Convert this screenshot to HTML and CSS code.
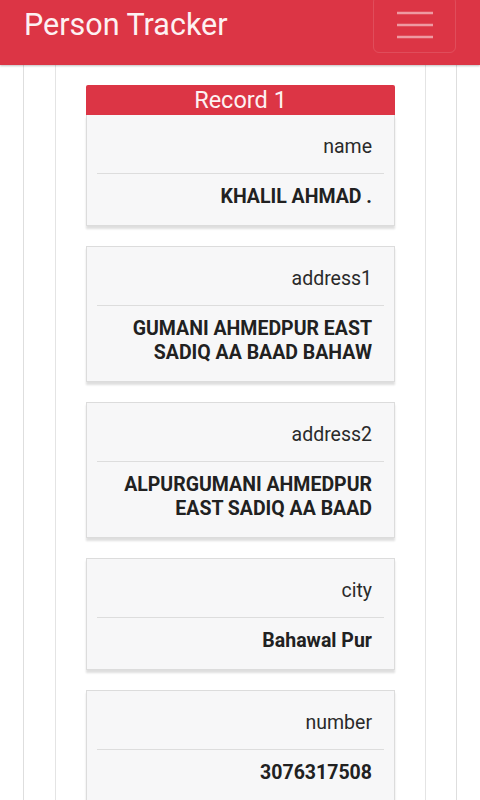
FILE: index.html
```html
<!DOCTYPE html>
<html>
<head>
<meta charset="utf-8">
<title>Person Tracker</title>
<link rel="stylesheet" href="styles.css">
</head>
<body>
<nav class="navbar">
  <span class="brand">Person Tracker</span>
  <button class="toggler" aria-label="menu">
    <svg width="36" height="30" viewBox="0 0 36 30"><path d="M0 3h36M0 15h36M0 27h36" stroke="rgba(255,255,255,0.5)" stroke-width="2.4"/></svg>
  </button>
</nav>
<div class="outer">
  <div class="inner">
    <div class="record-head">Record 1</div>
    <div class="card">
      <div class="label">name</div>
      <div class="sep"></div>
      <div class="value">KHALIL AHMAD .</div>
    </div>
    <div class="card">
      <div class="label">address1</div>
      <div class="sep"></div>
      <div class="value">GUMANI AHMEDPUR EAST<br>SADIQ AA BAAD BAHAW</div>
    </div>
    <div class="card">
      <div class="label">address2</div>
      <div class="sep"></div>
      <div class="value">ALPURGUMANI AHMEDPUR<br>EAST SADIQ AA BAAD</div>
    </div>
    <div class="card">
      <div class="label">city</div>
      <div class="sep"></div>
      <div class="value">Bahawal Pur</div>
    </div>
    <div class="card">
      <div class="label">number</div>
      <div class="sep"></div>
      <div class="value">3076317508</div>
    </div>
  </div>
</div>
</body>
</html>
```

FILE: styles.css
```css
* { box-sizing: border-box; }
html, body { margin: 0; padding: 0; background: #fff; }
body {
  font-family: Roboto, "Noto Sans", "Liberation Sans", sans-serif;
  color: #212529;
  overflow: hidden;
}
.navbar {
  height: 65px;
  background: #dc3545;
  display: flex;
  align-items: center;
  justify-content: space-between;
  padding: 0 24px 16px 24px;
  box-shadow: 0 1px 2px rgba(0,0,0,0.25);
  position: relative;
  z-index: 1;
}
.brand {
  font-size: 30.5px;
  line-height: 36px;
  color: #fdf1f2;
}
.toggler {
  width: 83px;
  height: 57px;
  margin-right: 0;
  background: transparent;
  border: 1px solid rgba(255,255,255,0.12);
  border-radius: 6px;
  display: flex;
  align-items: center;
  justify-content: center;
  padding: 0;
}
.toggler svg { display: block; }
.outer {
  margin: 0 23px;
  border-left: 1px solid #dedede;
  border-right: 1px solid #dedede;
  padding: 0 30px 0 31px;
}
.inner {
  border-left: 1px solid #e4e4e4;
  border-right: 1px solid #e4e4e4;
  padding: 20px 30px 0 30px;
  min-height: 740px;
}
.record-head {
  height: 30px;
  background: #dc3545;
  color: #fdf1f2;
  font-size: 23.5px;
  line-height: 30px;
  text-align: center;
  border-top-left-radius: 2px;
  border-top-right-radius: 2px;
}
.card {
  background: #f7f7f8;
  border: 1px solid #dcdcdc;
  padding: 20px 10px 16px;
  margin-bottom: 20px;
  box-shadow: 0 3px 2px rgba(0,0,0,0.13);
  text-align: right;
}
.record-head + .card { border-top: none; }
.label {
  font-size: 19.5px;
  line-height: 24px;
  padding-right: 12px;
  color: #2a2a2a;
}
.sep {
  height: 1px;
  background: #dddddd;
  margin: 14px 0 11px;
}
.value {
  font-size: 19.5px;
  line-height: 24px;
  font-weight: bold;
  padding-right: 12px;
  color: #212121;
}
```
